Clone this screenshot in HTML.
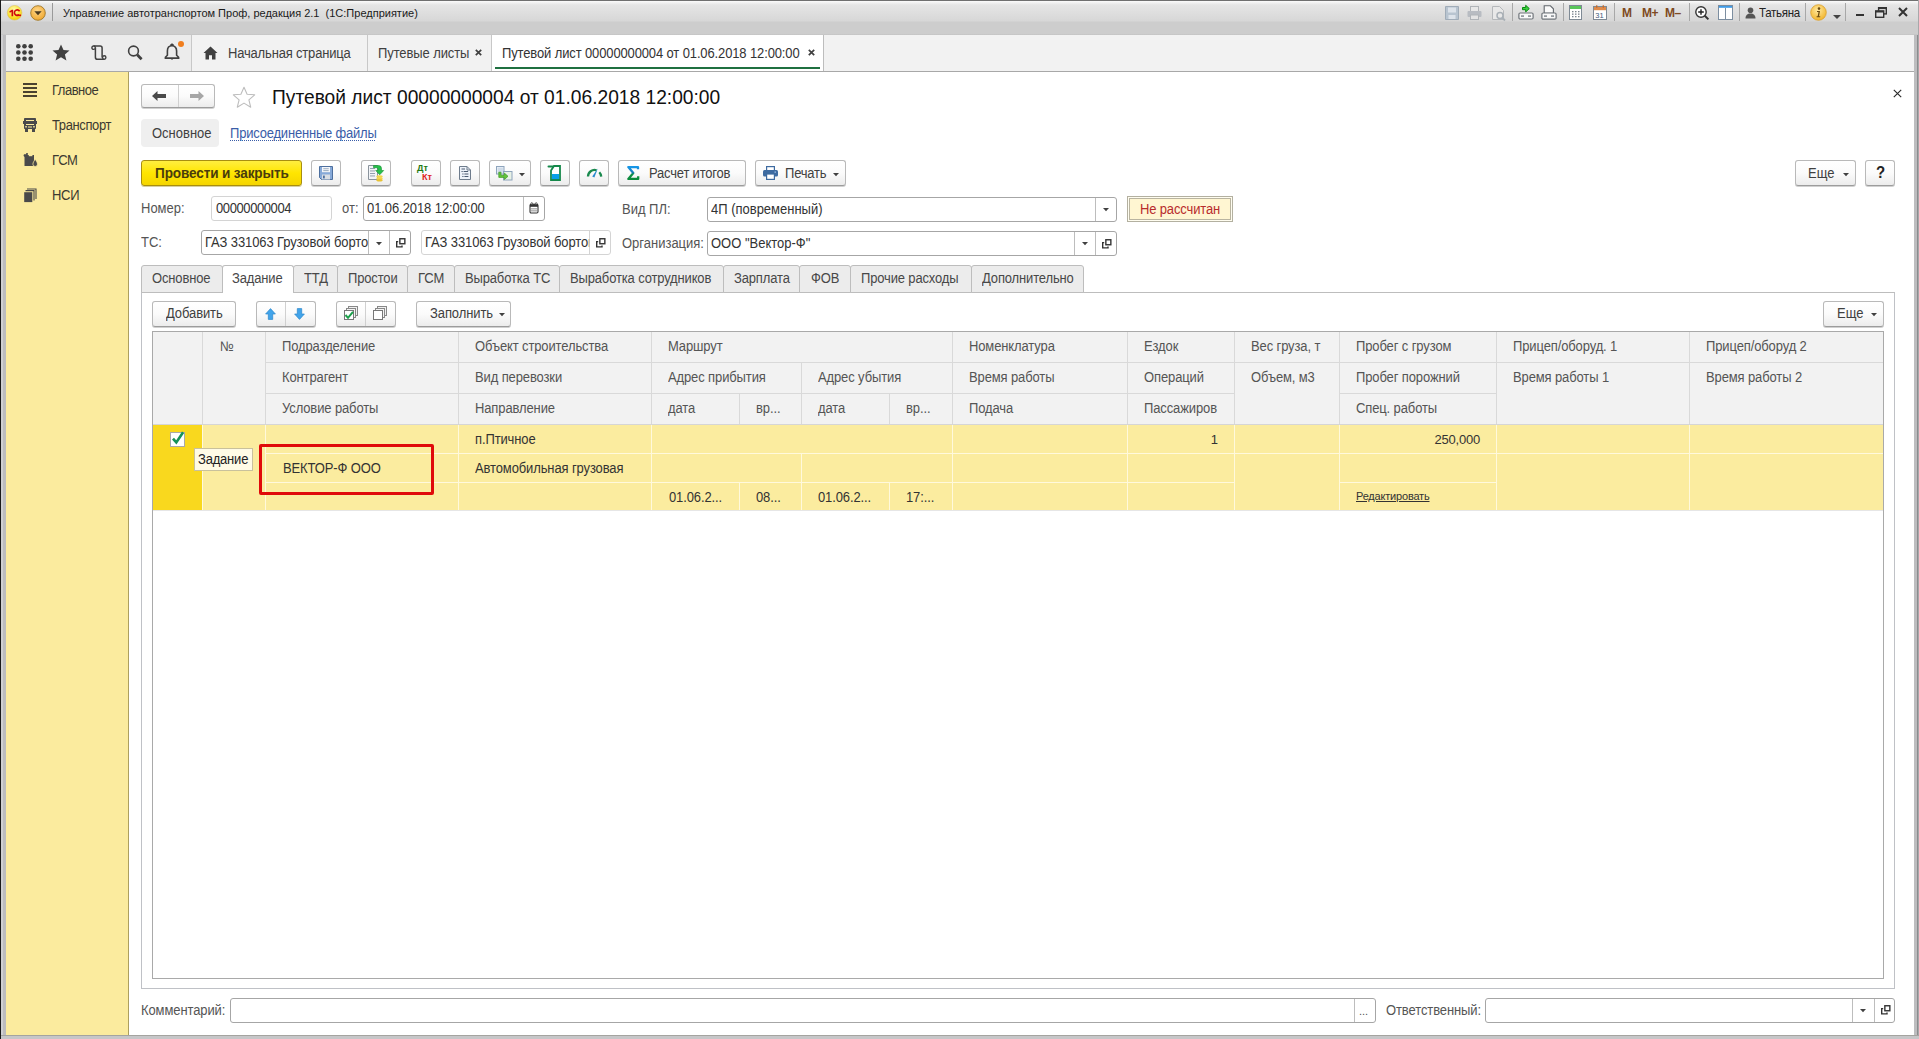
<!DOCTYPE html>
<html><head><meta charset="utf-8">
<style>
*{box-sizing:border-box;margin:0;padding:0}
html,body{width:1919px;height:1039px;overflow:hidden}
body{position:relative;background:#b8b8ba;font-family:"Liberation Sans",sans-serif;font-size:13px;color:#333}
.a{position:absolute}
svg.a{overflow:visible}
.t{position:absolute;white-space:pre}
</style></head><body>

<div class="a" style="left:0px;top:0px;width:1919px;height:1039px;background:#bcbcbe"></div>
<div class="a" style="left:0px;top:0px;width:1px;height:1039px;background:#1a1a1a"></div>
<div class="a" style="left:1px;top:0px;width:2px;height:1039px;background:#cfcfd1"></div>
<div class="a" style="left:1914px;top:0px;width:5px;height:1039px;background:#bdbdbf"></div>
<div class="a" style="left:1917px;top:0px;width:1px;height:1039px;background:#8c8c8e"></div>
<div class="a" style="left:1918px;top:0px;width:1px;height:1039px;background:#a8a8aa"></div>
<div class="a" style="left:1px;top:1035px;width:1918px;height:1px;background:#a4a4a0"></div>
<div class="a" style="left:1px;top:1036px;width:1918px;height:3px;background:#c6c6c8"></div>
<div class="a" style="left:0px;top:0px;width:1px;height:1039px;background:#1a1a1a"></div>
<div class="a" style="left:1px;top:0px;width:1917px;height:35px;background:linear-gradient(#6a6a6a 0px,#767676 1px,#fafafa 1.2px,#f0f0f0 3px,#e5e5e5 5px,#d7d7d7 21px,#cdcdcd 22px,#cdcdcd 33.5px,#c3c3c3 35px)"></div>
<svg class="a" style="left:7px;top:5px" width="16" height="16" viewBox="0 0 16 16"><defs><radialGradient id="g1" cx="45%" cy="30%" r="70%"><stop offset="0" stop-color="#fffbb0"/><stop offset="0.6" stop-color="#fbe640"/><stop offset="1" stop-color="#f2cc00"/></radialGradient></defs><circle cx="7.6" cy="7.8" r="7.3" fill="url(#g1)" stroke="#dcc060" stroke-width="0.6"/><path d="M2.2 6.4l2.6-1.6h1.4v6.4h-1.7v-4.4l-1.6 0.9z" fill="#d00a0a"/><path d="M12.6 6.2a2.8 2.6 0 1 0 -0.6 3.4" fill="none" stroke="#d00a0a" stroke-width="1.6"/><rect x="9.6" y="9.5" width="4.4" height="1.6" fill="#d00a0a"/></svg>
<svg class="a" style="left:30px;top:5px" width="16" height="16" viewBox="0 0 16 16"><defs><radialGradient id="g2" cx="45%" cy="35%" r="65%"><stop offset="0" stop-color="#ffd88a"/><stop offset="1" stop-color="#f0a830"/></radialGradient></defs><circle cx="8" cy="8" r="7.3" fill="url(#g2)" stroke="#a0782a" stroke-width="0.9"/><path d="M4.3 6.3h7.4l-3.7 4z" fill="#4a3a20"/></svg>
<div class="a" style="left:52px;top:3px;width:1px;height:18px;background:#9a9a9a"></div>
<div class="t" style="left:63px;top:7px;font-size:11.66px;line-height:11.66px;color:#1a1a1a;font-weight:normal;transform:scaleX(0.9434);transform-origin:0 0;">Управление автотранспортом Проф, редакция 2.1  (1С:Предприятие)</div>
<svg class="a" style="left:1445px;top:6px" width="14" height="14" viewBox="0 0 14 14"><path d="M0.5 0.5h13v13h-13z" fill="#b8c4d0" stroke="#a0acb8"/><rect x="3" y="1.5" width="8" height="5" fill="#dde3ea"/><rect x="3.5" y="9" width="7" height="4" fill="#dde3ea"/></svg>
<svg class="a" style="left:1467px;top:6px" width="15" height="14" viewBox="0 0 15 14"><rect x="3.5" y="0.5" width="8" height="5" fill="#e8e8e8" stroke="#b0b4b8"/><rect x="0.5" y="5" width="14" height="6" rx="1" fill="#b8bcc2"/><rect x="3.5" y="9" width="8" height="4.5" fill="#e4e4e4" stroke="#b0b4b8"/></svg>
<svg class="a" style="left:1492px;top:6px" width="14" height="15" viewBox="0 0 14 15"><path d="M0.5 0.5h7l4 4v9h-11z" fill="#e8e8e8" stroke="#b5b8bb"/><circle cx="8" cy="9.5" r="3" fill="none" stroke="#a9b0b6" stroke-width="1.5"/><path d="M10 11.5l3 3" stroke="#a9b0b6" stroke-width="1.8"/></svg>
<div class="a" style="left:1512px;top:3px;width:1px;height:18px;background:#a8a8a8"></div>
<svg class="a" style="left:1518px;top:4px" width="16" height="16" viewBox="0 0 16 16"><path d="M4.5 3.5h3.2v-2.2l3.6 3.3-3.6 3.3v-2.2h-3.2z" fill="#3ad040" stroke="#0a8a10" stroke-width="1"/><rect x="0.9" y="9" width="14.2" height="6" rx="1.2" fill="#f8f8f8" stroke="#6f747a" stroke-width="1.2"/><rect x="3" y="11.3" width="3" height="1.6" fill="#8a9096"/><rect x="10" y="11.3" width="3" height="1.6" fill="#8a9096"/><rect x="6" y="12.3" width="4" height="1" fill="#fff"/></svg>
<svg class="a" style="left:1541px;top:5px" width="16" height="15" viewBox="0 0 16 15"><path d="M3.2 0.8h6.2l3 3v4.5h-9.2z" fill="#fafafa" stroke="#63686e" stroke-width="1.1"/><rect x="0.9" y="8" width="14.2" height="6.2" rx="1.2" fill="#f8f8f8" stroke="#6f747a" stroke-width="1.2"/><rect x="3" y="10.3" width="3" height="1.6" fill="#8a9096"/><rect x="10" y="10.3" width="3" height="1.6" fill="#8a9096"/></svg>
<div class="a" style="left:1563px;top:3px;width:1px;height:18px;background:#a8a8a8"></div>
<svg class="a" style="left:1569px;top:5px" width="13" height="15" viewBox="0 0 13 15"><rect x="0.5" y="0.5" width="12" height="14" fill="#fff" stroke="#7f8a95"/><rect x="1" y="1" width="11" height="3" fill="#59c65a"/><g fill="#7a848e"><rect x="3" y="6" width="1.5" height="1.3"/><rect x="6" y="6" width="1.5" height="1.3"/><rect x="9" y="6" width="1.5" height="1.3"/><rect x="3" y="8.5" width="1.5" height="1.3"/><rect x="6" y="8.5" width="1.5" height="1.3"/><rect x="9" y="8.5" width="1.5" height="1.3"/><rect x="3" y="11" width="1.5" height="1.3"/><rect x="6" y="11" width="1.5" height="1.3"/><rect x="9" y="11" width="1.5" height="1.3"/></g></svg>
<svg class="a" style="left:1593px;top:5px" width="14" height="15" viewBox="0 0 14 15"><rect x="0.5" y="1.5" width="13" height="13" fill="#fff" stroke="#7f8a95"/><rect x="1" y="2" width="12" height="3.2" fill="#e08b4a"/><rect x="3" y="0.3" width="1.4" height="2.4" fill="#c06a30"/><rect x="9.6" y="0.3" width="1.4" height="2.4" fill="#c06a30"/><text x="2.3" y="12.8" font-family="Liberation Sans" font-size="7.5" fill="#3d5a7a">31</text></svg>
<div class="a" style="left:1614px;top:3px;width:1px;height:18px;background:#a8a8a8"></div>
<div class="t" style="left:1622px;top:7px;font-size:12px;line-height:12px;font-weight:bold;color:#7e4a22;letter-spacing:-0.3px">M</div>
<div class="t" style="left:1642px;top:7px;font-size:12px;line-height:12px;font-weight:bold;color:#7e4a22;letter-spacing:-0.5px">M+</div>
<div class="t" style="left:1665px;top:7px;font-size:12px;line-height:12px;font-weight:bold;color:#7e4a22;letter-spacing:-0.6px">M–</div>
<div class="a" style="left:1689px;top:3px;width:1px;height:18px;background:#a8a8a8"></div>
<svg class="a" style="left:1695px;top:6px" width="15" height="15" viewBox="0 0 15 15"><circle cx="6" cy="6" r="5.2" fill="#fff" stroke="#333" stroke-width="1.4"/><path d="M3.2 6h5.6M6 3.2v5.6" stroke="#222" stroke-width="1.4"/><path d="M9.8 9.8l3.6 3.6" stroke="#333" stroke-width="2"/></svg>
<svg class="a" style="left:1718px;top:5px" width="15" height="15" viewBox="0 0 15 15"><rect x="0.5" y="0.5" width="14" height="14" fill="#fff" stroke="#7c8ea0"/><rect x="1" y="1" width="13" height="1.8" fill="#3f9be6"/><path d="M7.5 3v11" stroke="#7c8ea0"/></svg>
<div class="a" style="left:1739px;top:3px;width:1px;height:18px;background:#a8a8a8"></div>
<svg class="a" style="left:1745px;top:7px" width="11" height="12" viewBox="0 0 11 12"><circle cx="5.5" cy="3.2" r="2.8" fill="#555"/><path d="M0.5 11.5c0-3.5 2-5 5-5s5 1.5 5 5z" fill="#555"/></svg>
<div class="t" style="left:1759px;top:7px;font-size:12.19px;line-height:12.19px;color:#222;font-weight:normal;transform:scaleX(0.9434);transform-origin:0 0;letter-spacing:-0.3px">Татьяна</div>
<div class="a" style="left:1805px;top:3px;width:1px;height:18px;background:#a8a8a8"></div>
<svg class="a" style="left:1810px;top:4px" width="17" height="17" viewBox="0 0 17 17"><defs><radialGradient id="g3" cx="45%" cy="35%" r="65%"><stop offset="0" stop-color="#ffe9a0"/><stop offset="1" stop-color="#f2b52c"/></radialGradient></defs><circle cx="8.5" cy="8.5" r="7.8" fill="url(#g3)" stroke="#d9a030" stroke-width="0.8"/><circle cx="9" cy="4.6" r="1.3" fill="#6a4a10"/><path d="M7 7h3l-1 5.2h1.2v1h-3.6v-1h1.1l0.8-4.2h-1.5z" fill="#6a4a10"/></svg>
<svg class="a" style="left:1833px;top:15px" width="8" height="4" viewBox="0 0 8 4"><path d="M0 0h8l-4 4z" fill="#444"/></svg>
<div class="a" style="left:1845px;top:3px;width:1px;height:18px;background:#a8a8a8"></div>
<div class="a" style="left:1856px;top:14px;width:8px;height:2px;background:#333"></div>
<svg class="a" style="left:1875px;top:7px" width="12" height="11" viewBox="0 0 12 11"><rect x="3.6" y="0.7" width="7.7" height="6.2" fill="none" stroke="#333" stroke-width="1.4"/><rect x="3.6" y="0.7" width="7.7" height="1.4" fill="#333"/><rect x="0.7" y="3.9" width="8" height="6.4" fill="#e0e0e0" stroke="#333" stroke-width="1.4"/><rect x="0.7" y="3.9" width="8" height="1.6" fill="#333"/></svg>
<svg class="a" style="left:1898px;top:7px" width="10" height="10" viewBox="0 0 10 10"><path d="M1 1l8 8M9 1l-8 8" stroke="#333" stroke-width="2"/></svg>
<div class="a" style="left:6px;top:35px;width:1908px;height:37px;background:#f2f2f2;border-bottom:1px solid #a8a8a8"></div>
<div class="a" style="left:6px;top:35px;width:185px;height:36px;background:#ececec"></div>
<div class="a" style="left:191px;top:35px;width:1px;height:36px;background:#c8c8c8"></div>
<svg class="a" style="left:16px;top:44px" width="17" height="17" viewBox="0 0 17 17"><circle cx="2.3" cy="2.3" r="2.3" fill="#404040"/><circle cx="2.3" cy="8.5" r="2.3" fill="#404040"/><circle cx="2.3" cy="14.7" r="2.3" fill="#404040"/><circle cx="8.5" cy="2.3" r="2.3" fill="#404040"/><circle cx="8.5" cy="8.5" r="2.3" fill="#404040"/><circle cx="8.5" cy="14.7" r="2.3" fill="#404040"/><circle cx="14.7" cy="2.3" r="2.3" fill="#404040"/><circle cx="14.7" cy="8.5" r="2.3" fill="#404040"/><circle cx="14.7" cy="14.7" r="2.3" fill="#404040"/></svg>
<svg class="a" style="left:52px;top:44px" width="18" height="17" viewBox="0 0 18 17"><path d="M9 0.5l2.5 5.6 6 0.5-4.6 4 1.5 6-5.4-3.3-5.4 3.3 1.5-6-4.6-4 6-0.5z" fill="#404040"/></svg>
<svg class="a" style="left:91px;top:45px" width="16" height="16" viewBox="0 0 16 16"><path d="M2.6 1H9.1A2 2 0 0 1 11.1 3V12.4 M4.4 2.6V12.4A2 2 0 0 0 6.4 14.3H13.2" fill="none" stroke="#404040" stroke-width="1.5"/><circle cx="2.6" cy="2.7" r="1.7" fill="#f0f0f0" stroke="#404040" stroke-width="1.4"/><circle cx="13.2" cy="12.5" r="1.7" fill="#f0f0f0" stroke="#404040" stroke-width="1.4"/></svg>
<svg class="a" style="left:127px;top:45px" width="17" height="17" viewBox="0 0 17 17"><circle cx="6.5" cy="6" r="4.9" fill="none" stroke="#404040" stroke-width="1.6"/><path d="M10.2 9.8l4.4 4.4" stroke="#404040" stroke-width="2.8"/></svg>
<svg class="a" style="left:164px;top:43px" width="16" height="18" viewBox="0 0 16 18"><path d="M8 2.8c-3 0-4.6 2.3-4.6 5.2v4.2l-2 2.1v0.8h13.2v-0.8l-2-2.1v-4.2c0-2.9-1.6-5.2-4.6-5.2z" fill="none" stroke="#404040" stroke-width="1.6"/><path d="M6.2 1.5l1.8-1.3 1.8 1.3v1.6h-3.6z" fill="#404040"/><path d="M6.3 15.3l1.7 1.7 1.7-1.7z" fill="#404040"/></svg>
<svg class="a" style="left:178px;top:41px" width="6" height="6" viewBox="0 0 6 6"><circle cx="3" cy="3" r="3" fill="#f07e1e"/></svg>
<svg class="a" style="left:203px;top:46px" width="15" height="14" viewBox="0 0 15 14"><path d="M7.5 0.5l7 6.4h-2v6.6h-3.5v-4.3h-3v4.3h-3.5v-6.6h-2z" fill="#404040"/></svg>
<div class="t" style="left:228px;top:47px;font-size:13.78px;line-height:13.78px;color:#404040;font-weight:normal;transform:scaleX(0.9434);transform-origin:0 0;letter-spacing:-0.18px">Начальная страница</div>
<div class="a" style="left:367px;top:35px;width:1px;height:36px;background:#c8c8c8"></div>
<div class="t" style="left:378px;top:47px;font-size:13.78px;line-height:13.78px;color:#404040;font-weight:normal;transform:scaleX(0.9434);transform-origin:0 0;letter-spacing:-0.1px">Путевые листы</div>
<svg class="a" style="left:475px;top:49px" width="7" height="7" viewBox="0 0 7 7"><path d="M0.8 0.8l5.4 5.4M6.2 0.8l-5.4 5.4" stroke="#404040" stroke-width="1.7"/></svg>
<div class="a" style="left:491px;top:35px;width:1px;height:36px;background:#c8c8c8"></div>
<div class="a" style="left:492px;top:35px;width:331px;height:36px;background:#fff"></div>
<div class="a" style="left:823px;top:35px;width:1px;height:36px;background:#bdbdbd"></div>
<div class="t" style="left:502px;top:47px;font-size:13.78px;line-height:13.78px;color:#333;font-weight:normal;transform:scaleX(0.9434);transform-origin:0 0;letter-spacing:-0.13px">Путевой лист 00000000004 от 01.06.2018 12:00:00</div>
<svg class="a" style="left:808px;top:49px" width="7" height="7" viewBox="0 0 7 7"><path d="M0.8 0.8l5.4 5.4M6.2 0.8l-5.4 5.4" stroke="#404040" stroke-width="1.7"/></svg>
<div class="a" style="left:495px;top:67px;width:325px;height:2px;background:#1f7040"></div>
<div class="a" style="left:6px;top:72px;width:123px;height:963px;background:#fbeb9e"></div>
<div class="a" style="left:128px;top:72px;width:1px;height:963px;background:#ad9f5e"></div>
<svg class="a" style="left:23px;top:83px" width="14" height="14" viewBox="0 0 14 14"><g fill="#4a4230"><rect x="0" y="0" width="14" height="2"/><rect x="0" y="4" width="14" height="2"/><rect x="0" y="8" width="14" height="2"/><rect x="0" y="12" width="14" height="2"/></g></svg>
<div class="t" style="left:52px;top:84px;font-size:13.78px;line-height:13.78px;color:#3d3a30;font-weight:normal;transform:scaleX(0.9434);transform-origin:0 0;letter-spacing:-0.5px">Главное</div>
<svg class="a" style="left:22px;top:117px" width="16" height="16" viewBox="0 0 16 16"><rect x="2" y="1" width="12" height="11" rx="0.8" fill="#4a4a4a"/><rect x="4.5" y="3.5" width="7" height="4" fill="none" stroke="#fbeb9e" stroke-width="1"/><rect x="1" y="4" width="14" height="3" fill="#4a4a4a"/><rect x="3.3" y="9" width="1.5" height="1.5" fill="#fbeb9e"/><rect x="11.2" y="9" width="1.5" height="1.5" fill="#fbeb9e"/><rect x="6" y="9.5" width="4" height="1" fill="#fbeb9e"/><rect x="3" y="12" width="3" height="3" fill="#4a4a4a"/><rect x="10" y="12" width="3" height="3" fill="#4a4a4a"/></svg>
<div class="t" style="left:52px;top:119px;font-size:13.78px;line-height:13.78px;color:#3d3a30;font-weight:normal;transform:scaleX(0.9434);transform-origin:0 0;letter-spacing:-0.4px">Транспорт</div>
<svg class="a" style="left:22px;top:152px" width="16" height="16" viewBox="0 0 16 16"><path d="M2 2.2h2.2v-1.2h1.6v2h6.2v11h-9.5v-9l-1-1.2z" fill="#4a4a4a"/><rect x="6.8" y="2.6" width="3.6" height="1.6" fill="#fbeb9e"/><path d="M13.2 7.2c1 1.6 2.3 3.3 2.3 5a2.3 2.3 0 0 1-4.6 0c0-1.7 1.3-3.4 2.3-5z" fill="#4a4a4a" stroke="#fbeb9e" stroke-width="0.8"/></svg>
<div class="t" style="left:52px;top:154px;font-size:13.78px;line-height:13.78px;color:#3d3a30;font-weight:normal;transform:scaleX(0.9434);transform-origin:0 0;letter-spacing:-0.3px">ГСМ</div>
<svg class="a" style="left:23px;top:188px" width="14" height="15" viewBox="0 0 14 15"><path d="M4 1h9v10" fill="none" stroke="#4a4a4a" stroke-width="1.1"/><path d="M2.5 2.6h8.5v10" fill="none" stroke="#4a4a4a" stroke-width="1.1"/><rect x="1.2" y="4.2" width="8.1" height="9.9" fill="#4a4a4a"/></svg>
<div class="t" style="left:52px;top:189px;font-size:13.78px;line-height:13.78px;color:#3d3a30;font-weight:normal;transform:scaleX(0.9434);transform-origin:0 0;letter-spacing:-0.3px">НСИ</div>
<div class="a" style="left:129px;top:72px;width:1785px;height:963px;background:#fff"></div>
<div class="a" style="left:141px;top:84px;width:74px;height:24px;border:1px solid #b9b9b9;border-radius:3px;background:linear-gradient(#ffffff 0%,#fbfbfb 50%,#ececec 100%);border-bottom-color:#9c9c9c;box-shadow:0 1px 0 #d0d0d0;"></div>
<div class="a" style="left:178px;top:85px;width:1px;height:22px;background:#d0d0d0"></div>
<svg class="a" style="left:152px;top:91px" width="14" height="10" viewBox="0 0 14 10"><path d="M0 5l5.5-5v3h8.5v4h-8.5v3z" fill="#4a4a4a"/></svg>
<svg class="a" style="left:190px;top:91px" width="14" height="10" viewBox="0 0 14 10"><path d="M14 5l-5.5-5v3h-8.5v4h8.5v3z" fill="#a6a6a6"/></svg>
<svg class="a" style="left:232px;top:86px" width="24" height="22" viewBox="0 0 24 22"><path d="M12 1.2l3.1 7 7.6 0.6-5.8 5 1.8 7.4-6.7-4.1-6.7 4.1 1.8-7.4-5.8-5 7.6-0.6z" fill="none" stroke="#bdbdbd" stroke-width="1.1" stroke-linejoin="round"/></svg>
<div class="t" style="left:272px;top:87px;font-size:20.35px;line-height:20.35px;color:#111;font-weight:normal;transform:scaleX(0.9434);transform-origin:0 0;">Путевой лист 00000000004 от 01.06.2018 12:00:00</div>
<svg class="a" style="left:1893px;top:89px" width="9" height="9" viewBox="0 0 9 9"><path d="M0.8 0.8l7.4 7.4M8.2 0.8l-7.4 7.4" stroke="#2a2a2a" stroke-width="1.15"/></svg>
<div class="a" style="left:141px;top:119px;width:78px;height:28px;background:#efefef;border-radius:4px"></div>
<div class="t" style="left:151.5px;top:127px;font-size:13.78px;line-height:13.78px;color:#404040;font-weight:normal;transform:scaleX(0.9434);transform-origin:0 0;">Основное</div>
<div class="t" style="left:230px;top:127px;font-size:13.78px;line-height:13.78px;color:#3a5da8;font-weight:normal;transform:scaleX(0.9434);transform-origin:0 0;letter-spacing:-0.2px">Присоединенные файлы</div>
<div class="a" style="left:230px;top:140px;width:146px;height:1px;background:repeating-linear-gradient(90deg,#3a5da8 0 1px,transparent 1px 2px)"></div>
<div class="a" style="left:141px;top:160px;width:161px;height:26px;border:1px solid #a88e10;border-radius:3px;background:linear-gradient(#ffee40 0%,#ffe500 50%,#f5d500 100%);box-shadow:0 1px 0 #d8d0a0"></div>
<div class="t" style="left:155px;top:166px;font-size:14.42px;line-height:14.42px;color:#4a3c0c;font-weight:bold;transform:scaleX(0.9434);transform-origin:0 0;letter-spacing:-0.15px">Провести и закрыть</div>
<div class="a" style="left:311px;top:160px;width:30px;height:26px;border:1px solid #b9b9b9;border-radius:3px;background:linear-gradient(#ffffff 0%,#fbfbfb 50%,#ececec 100%);border-bottom-color:#9c9c9c;box-shadow:0 1px 0 #d0d0d0;"></div>
<svg class="a" style="left:319px;top:166px" width="14" height="14" viewBox="0 0 14 14"><path d="M0.5 0.5h13v13h-11l-2-2z" fill="#86a9d8" stroke="#4d6f9e"/><rect x="3" y="1" width="8" height="5.2" fill="#f4f6fa"/><rect x="4.3" y="2.3" width="5.4" height="0.9" fill="#8fa3b8"/><rect x="4.3" y="4.2" width="5.4" height="0.9" fill="#8fa3b8"/><rect x="3" y="8.5" width="8" height="5" fill="#d8dde4"/><rect x="4" y="9.6" width="1.8" height="2.8" fill="#4d6f9e"/></svg>
<div class="a" style="left:361px;top:160px;width:30px;height:26px;border:1px solid #b9b9b9;border-radius:3px;background:linear-gradient(#ffffff 0%,#fbfbfb 50%,#ececec 100%);border-bottom-color:#9c9c9c;box-shadow:0 1px 0 #d0d0d0;"></div>
<svg class="a" style="left:368px;top:165px" width="16" height="17" viewBox="0 0 16 17"><path d="M0.5 0.5h9v14h-9z" fill="#f2f4f7" stroke="#8a939c"/><g fill="#8a96a6"><rect x="2" y="3" width="5" height="0.9"/><rect x="2" y="5.5" width="5" height="0.9"/><rect x="2" y="8" width="5" height="0.9"/><rect x="2" y="10.5" width="5" height="0.9"/></g><path d="M5.5 0.5h5a3 3 0 0 1 3 3v2h2.2l-4 4.3-4-4.3h2.2v-1.5a1.3 1.3 0 0 0-1.3-1.3h-3.1z" fill="#25c04a" stroke="#159030" stroke-width="0.6"/><ellipse cx="11.5" cy="11.5" rx="3.2" ry="1.3" fill="#f3d54a"/><ellipse cx="11.5" cy="13.5" rx="3.2" ry="1.3" fill="#f3d54a"/><ellipse cx="11.5" cy="15.2" rx="3.2" ry="1.3" fill="#e8c234"/></svg>
<div class="a" style="left:411px;top:160px;width:30px;height:26px;border:1px solid #b9b9b9;border-radius:3px;background:linear-gradient(#ffffff 0%,#fbfbfb 50%,#ececec 100%);border-bottom-color:#9c9c9c;box-shadow:0 1px 0 #d0d0d0;"></div>
<div class="t" style="left:417px;top:164px;font-size:9px;line-height:9px;font-weight:bold;color:#1e7a12">Дт</div>
<div class="t" style="left:422px;top:173px;font-size:9px;line-height:9px;font-weight:bold;color:#e02020">Кт</div>
<div class="a" style="left:450px;top:160px;width:30px;height:26px;border:1px solid #b9b9b9;border-radius:3px;background:linear-gradient(#ffffff 0%,#fbfbfb 50%,#ececec 100%);border-bottom-color:#9c9c9c;box-shadow:0 1px 0 #d0d0d0;"></div>
<svg class="a" style="left:459px;top:166px" width="12" height="14" viewBox="0 0 12 14"><path d="M0.5 0.5h7.5l3.5 3.5v9.5h-11z" fill="#eef3fa" stroke="#6e7c8c"/><path d="M8 0.5v3.5h3.5" fill="none" stroke="#6e7c8c"/><g fill="#4a5a70"><rect x="2.5" y="2.5" width="3.5" height="1"/><rect x="2.5" y="5" width="1.2" height="1"/><rect x="4.6" y="5" width="4.5" height="1"/><rect x="3.3" y="7.5" width="1.2" height="1"/><rect x="5.4" y="7.5" width="4" height="1"/><rect x="3.3" y="10" width="1.2" height="1"/><rect x="5.4" y="10" width="4" height="1"/></g></svg>
<div class="a" style="left:489px;top:160px;width:42px;height:26px;border:1px solid #b9b9b9;border-radius:3px;background:linear-gradient(#ffffff 0%,#fbfbfb 50%,#ececec 100%);border-bottom-color:#9c9c9c;box-shadow:0 1px 0 #d0d0d0;"></div>
<svg class="a" style="left:496px;top:166px" width="17" height="15" viewBox="0 0 17 15"><rect x="0.5" y="0.5" width="7.5" height="7.5" fill="#e6eef6" stroke="#8ea4bc"/><rect x="1.8" y="1.8" width="5" height="5" fill="#cfdbe8"/><rect x="7.5" y="5.5" width="8.5" height="8.5" fill="#e9f2e6" stroke="#8ea4bc"/><path d="M2.8 6.2v5.2h5.6v2.1l3.6-3.2-3.6-3.2v2.1h-3.4v-3z" fill="#64c43c" stroke="#3c9a22" stroke-width="0.7"/></svg>
<svg class="a" style="left:518.5px;top:173.0px" width="6" height="4" viewBox="0 0 6 4"><path d="M0 0h6l-3 3.2z" fill="#404040"/></svg>
<div class="a" style="left:540px;top:160px;width:30px;height:26px;border:1px solid #b9b9b9;border-radius:3px;background:linear-gradient(#ffffff 0%,#fbfbfb 50%,#ececec 100%);border-bottom-color:#9c9c9c;box-shadow:0 1px 0 #d0d0d0;"></div>
<svg class="a" style="left:547px;top:164px" width="15" height="18" viewBox="0 0 15 18"><path d="M7 2h6v14h-9v-9.5z" fill="#fff" stroke="#14884a" stroke-width="1.8"/><rect x="4.9" y="10" width="7.2" height="5.1" fill="#08a0e8"/><path d="M1.6 2.5h4.2" stroke="#14884a" stroke-width="2.2" stroke-linecap="round"/></svg>
<div class="a" style="left:579px;top:160px;width:30px;height:26px;border:1px solid #b9b9b9;border-radius:3px;background:linear-gradient(#ffffff 0%,#fbfbfb 50%,#ececec 100%);border-bottom-color:#9c9c9c;box-shadow:0 1px 0 #d0d0d0;"></div>
<svg class="a" style="left:586px;top:167px" width="17" height="11" viewBox="0 0 17 11"><path d="M2 9.6A6.6 6.6 0 0 1 10.6 3.3" fill="none" stroke="#1a8a4e" stroke-width="2.3"/><path d="M13.3 5.3A6.6 6.6 0 0 1 15.2 9.6" fill="none" stroke="#1a8a4e" stroke-width="2.3"/><path d="M6.2 9.4l5.6-8 -3.4 9.2z" fill="#2a8ad0"/></svg>
<div class="a" style="left:618px;top:160px;width:128px;height:26px;border:1px solid #b9b9b9;border-radius:3px;background:linear-gradient(#ffffff 0%,#fbfbfb 50%,#ececec 100%);border-bottom-color:#9c9c9c;box-shadow:0 1px 0 #d0d0d0;"></div>
<svg class="a" style="left:626px;top:165px" width="14" height="16" viewBox="0 0 14 16"><defs><linearGradient id="sg" x1="0" y1="0" x2="0" y2="1"><stop offset="0" stop-color="#1596e8"/><stop offset="0.45" stop-color="#1a7ab8"/><stop offset="0.6" stop-color="#10904a"/><stop offset="1" stop-color="#0a8a3a"/></linearGradient></defs><path d="M12 4.3V2.1H2.3L7.3 8 2.3 13.9H12.2V11.2" fill="none" stroke="url(#sg)" stroke-width="2.3" stroke-linejoin="round"/></svg>
<div class="t" style="left:648.7px;top:167px;font-size:13.78px;line-height:13.78px;color:#404040;font-weight:normal;transform:scaleX(0.9434);transform-origin:0 0;letter-spacing:-0.2px">Расчет итогов</div>
<div class="a" style="left:755px;top:160px;width:91px;height:26px;border:1px solid #b9b9b9;border-radius:3px;background:linear-gradient(#ffffff 0%,#fbfbfb 50%,#ececec 100%);border-bottom-color:#9c9c9c;box-shadow:0 1px 0 #d0d0d0;"></div>
<svg class="a" style="left:763px;top:166px" width="15" height="14" viewBox="0 0 15 14"><rect x="3.6" y="0.6" width="7.8" height="4" fill="#fff" stroke="#3d6aa0" stroke-width="1.2"/><rect x="0" y="4" width="15" height="6.5" rx="1.5" fill="#3d6aa0"/><rect x="3.6" y="8" width="7.8" height="5.4" fill="#fff" stroke="#3d6aa0" stroke-width="1.2"/><rect x="11.5" y="5.5" width="1.5" height="1.2" fill="#9fc0e8"/></svg>
<div class="t" style="left:785.4px;top:167px;font-size:13.78px;line-height:13.78px;color:#404040;font-weight:normal;transform:scaleX(0.9434);transform-origin:0 0;letter-spacing:-0.2px">Печать</div>
<svg class="a" style="left:833px;top:172.5px" width="6" height="4" viewBox="0 0 6 4"><path d="M0 0h6l-3 3.2z" fill="#404040"/></svg>
<div class="a" style="left:1795px;top:160px;width:61px;height:26px;border:1px solid #b9b9b9;border-radius:3px;background:linear-gradient(#ffffff 0%,#fbfbfb 50%,#ececec 100%);border-bottom-color:#9c9c9c;box-shadow:0 1px 0 #d0d0d0;"></div>
<div class="t" style="left:1808px;top:167px;font-size:13.78px;line-height:13.78px;color:#404040;font-weight:normal;transform:scaleX(0.9434);transform-origin:0 0;">Еще</div>
<svg class="a" style="left:1843px;top:172.5px" width="6" height="4" viewBox="0 0 6 4"><path d="M0 0h6l-3 3.2z" fill="#404040"/></svg>
<div class="a" style="left:1865px;top:160px;width:30px;height:26px;border:1px solid #b9b9b9;border-radius:3px;background:linear-gradient(#ffffff 0%,#fbfbfb 50%,#ececec 100%);border-bottom-color:#9c9c9c;box-shadow:0 1px 0 #d0d0d0;"></div>
<div class="t" style="left:1876px;top:165px;font-size:15.9px;line-height:15.9px;color:#222;font-weight:bold;transform:scaleX(0.9434);transform-origin:0 0;">?</div>
<div class="t" style="left:141px;top:202px;font-size:13.78px;line-height:13.78px;color:#555;font-weight:normal;transform:scaleX(0.9434);transform-origin:0 0;">Номер:</div>
<div class="a" style="left:211px;top:196px;width:121px;height:25px;border:1px solid #d4d4d4;border-radius:3px;background:#fff"></div>
<div class="t" style="left:215.5px;top:202px;font-size:13.78px;line-height:13.78px;color:#333;font-weight:normal;transform:scaleX(0.9434);transform-origin:0 0;letter-spacing:-0.42px">00000000004</div>
<div class="t" style="left:342px;top:202px;font-size:13.78px;line-height:13.78px;color:#555;font-weight:normal;transform:scaleX(0.9434);transform-origin:0 0;">от:</div>
<div class="a" style="left:363px;top:196px;width:182px;height:25px;border:1px solid #a6a6a6;border-radius:3px;background:#fff"></div>
<div class="a" style="left:523px;top:197px;width:1px;height:23px;background:#bdbdbd"></div>
<div class="t" style="left:367px;top:202px;font-size:13.78px;line-height:13.78px;color:#333;font-weight:normal;transform:scaleX(0.9434);transform-origin:0 0;letter-spacing:-0.08px">01.06.2018 12:00:00</div>
<svg class="a" style="left:529px;top:202px" width="10" height="12" viewBox="0 0 10 12"><rect x="1" y="2.2" width="8" height="8.8" rx="1.2" fill="#fff" stroke="#333" stroke-width="1.1"/><rect x="1" y="2.2" width="8" height="2.6" fill="#333"/><circle cx="2.8" cy="1.6" r="0.9" fill="#fff" stroke="#333" stroke-width="0.8"/><circle cx="7.2" cy="1.6" r="0.9" fill="#fff" stroke="#333" stroke-width="0.8"/><g fill="#333"><circle cx="3" cy="6.8" r="0.65"/><circle cx="5" cy="6.8" r="0.65"/><circle cx="7" cy="6.8" r="0.65"/><circle cx="3" cy="8.8" r="0.65"/><circle cx="5" cy="8.8" r="0.65"/><circle cx="7" cy="8.8" r="0.65"/></g></svg>
<div class="t" style="left:621.5px;top:203px;font-size:13.78px;line-height:13.78px;color:#555;font-weight:normal;transform:scaleX(0.9434);transform-origin:0 0;">Вид ПЛ:</div>
<div class="a" style="left:707px;top:197px;width:410px;height:25px;border:1px solid #a6a6a6;border-radius:3px;background:#fff"></div>
<div class="a" style="left:1095px;top:198px;width:1px;height:23px;background:#bdbdbd"></div>
<div class="t" style="left:711px;top:203px;font-size:13.78px;line-height:13.78px;color:#333;font-weight:normal;transform:scaleX(0.9434);transform-origin:0 0;">4П (повременный)</div>
<svg class="a" style="left:1102.5px;top:208.0px" width="6" height="4" viewBox="0 0 6 4"><path d="M0 0h6l-3 3.2z" fill="#404040"/></svg>
<div class="a" style="left:1127px;top:196px;width:106px;height:26px;border:1px solid #b3b0a0;background:#fff6d2;box-shadow:inset 0 0 0 1px #fffdf0,inset 0 0 0 2px #b9b4a0"></div>
<div class="t" style="left:1139.5px;top:203px;font-size:13.78px;line-height:13.78px;color:#b82c2c;font-weight:normal;transform:scaleX(0.9434);transform-origin:0 0;letter-spacing:-0.15px">Не рассчитан</div>
<div class="t" style="left:141px;top:236px;font-size:13.78px;line-height:13.78px;color:#555;font-weight:normal;transform:scaleX(0.9434);transform-origin:0 0;">ТС:</div>
<div class="a" style="left:201px;top:230px;width:210px;height:25px;border:1px solid #a6a6a6;border-radius:3px;background:#fff"></div>
<div class="a" style="left:368px;top:231px;width:1px;height:23px;background:#bdbdbd"></div>
<div class="a" style="left:389px;top:231px;width:1px;height:23px;background:#bdbdbd"></div>
<div class="t" style="left:205px;top:236px;font-size:13.78px;line-height:13.78px;color:#333;font-weight:normal;transform:scaleX(0.9434);transform-origin:0 0;width:172.8px;overflow:hidden;letter-spacing:-0.1px">ГАЗ 331063 Грузовой бортовой</div>
<svg class="a" style="left:375.5px;top:241.5px" width="6" height="4" viewBox="0 0 6 4"><path d="M0 0h6l-3 3.2z" fill="#404040"/></svg>
<svg class="a" style="left:396px;top:238px" width="10" height="10" viewBox="0 0 10 10"><rect x="3.85" y="0.75" width="5" height="5" fill="none" stroke="#333" stroke-width="1.4"/><path d="M2.2 3.6H0.7V8.9H6V7.4" fill="none" stroke="#333" stroke-width="1.4"/></svg>
<div class="a" style="left:421px;top:230px;width:190px;height:25px;border:1px solid #d4d4d4;border-radius:3px;background:#fff"></div>
<div class="a" style="left:589px;top:231px;width:1px;height:23px;background:#d4d4d4"></div>
<div class="t" style="left:425px;top:236px;font-size:13.78px;line-height:13.78px;color:#333;font-weight:normal;transform:scaleX(0.9434);transform-origin:0 0;width:173.8px;overflow:hidden;letter-spacing:-0.1px">ГАЗ 331063 Грузовой бортовой</div>
<svg class="a" style="left:596px;top:238px" width="10" height="10" viewBox="0 0 10 10"><rect x="3.85" y="0.75" width="5" height="5" fill="none" stroke="#333" stroke-width="1.4"/><path d="M2.2 3.6H0.7V8.9H6V7.4" fill="none" stroke="#333" stroke-width="1.4"/></svg>
<div class="t" style="left:621.5px;top:237px;font-size:13.78px;line-height:13.78px;color:#555;font-weight:normal;transform:scaleX(0.9434);transform-origin:0 0;">Организация:</div>
<div class="a" style="left:707px;top:231px;width:410px;height:25px;border:1px solid #a6a6a6;border-radius:3px;background:#fff"></div>
<div class="a" style="left:1074px;top:232px;width:1px;height:23px;background:#bdbdbd"></div>
<div class="a" style="left:1095px;top:232px;width:1px;height:23px;background:#bdbdbd"></div>
<div class="t" style="left:711px;top:237px;font-size:13.78px;line-height:13.78px;color:#333;font-weight:normal;transform:scaleX(0.9434);transform-origin:0 0;">ООО "Вектор-Ф"</div>
<svg class="a" style="left:1081.5px;top:242.0px" width="6" height="4" viewBox="0 0 6 4"><path d="M0 0h6l-3 3.2z" fill="#404040"/></svg>
<svg class="a" style="left:1102px;top:238.5px" width="10" height="10" viewBox="0 0 10 10"><rect x="3.85" y="0.75" width="5" height="5" fill="none" stroke="#333" stroke-width="1.4"/><path d="M2.2 3.6H0.7V8.9H6V7.4" fill="none" stroke="#333" stroke-width="1.4"/></svg>
<div class="a" style="left:141px;top:292px;width:1754px;height:697px;border:1px solid #bfc1c6;border-top:1px solid #bdbdbd"></div>
<div class="a" style="left:141px;top:265px;width:82px;height:28px;background:#ececec;border:1px solid #bdbdbd;border-radius:3px 3px 0 0;border-bottom:1px solid #bdbdbd"></div>
<div class="a" style="left:222px;top:265px;width:72px;height:28px;background:#fff;border:1px solid #bdbdbd;border-radius:3px 3px 0 0;border-bottom:none;height:28px"></div>
<div class="a" style="left:223px;top:291px;width:70px;height:2px;background:#fff"></div>
<div class="a" style="left:293px;top:265px;width:45px;height:28px;background:#ececec;border:1px solid #bdbdbd;border-radius:3px 3px 0 0;border-bottom:1px solid #bdbdbd"></div>
<div class="a" style="left:337px;top:265px;width:71px;height:28px;background:#ececec;border:1px solid #bdbdbd;border-radius:3px 3px 0 0;border-bottom:1px solid #bdbdbd"></div>
<div class="a" style="left:407px;top:265px;width:48px;height:28px;background:#ececec;border:1px solid #bdbdbd;border-radius:3px 3px 0 0;border-bottom:1px solid #bdbdbd"></div>
<div class="a" style="left:454px;top:265px;width:106px;height:28px;background:#ececec;border:1px solid #bdbdbd;border-radius:3px 3px 0 0;border-bottom:1px solid #bdbdbd"></div>
<div class="a" style="left:559px;top:265px;width:165px;height:28px;background:#ececec;border:1px solid #bdbdbd;border-radius:3px 3px 0 0;border-bottom:1px solid #bdbdbd"></div>
<div class="a" style="left:723px;top:265px;width:77px;height:28px;background:#ececec;border:1px solid #bdbdbd;border-radius:3px 3px 0 0;border-bottom:1px solid #bdbdbd"></div>
<div class="a" style="left:799px;top:265px;width:52px;height:28px;background:#ececec;border:1px solid #bdbdbd;border-radius:3px 3px 0 0;border-bottom:1px solid #bdbdbd"></div>
<div class="a" style="left:850px;top:265px;width:122px;height:28px;background:#ececec;border:1px solid #bdbdbd;border-radius:3px 3px 0 0;border-bottom:1px solid #bdbdbd"></div>
<div class="a" style="left:971px;top:265px;width:113px;height:28px;background:#ececec;border:1px solid #bdbdbd;border-radius:3px 3px 0 0;border-bottom:1px solid #bdbdbd"></div>
<div class="t" style="left:152px;top:272px;font-size:13.78px;line-height:13.78px;color:#484848;font-weight:normal;transform:scaleX(0.9434);transform-origin:0 0;letter-spacing:-0.15px">Основное</div>
<div class="t" style="left:232px;top:272px;font-size:13.78px;line-height:13.78px;color:#484848;font-weight:normal;transform:scaleX(0.9434);transform-origin:0 0;letter-spacing:-0.15px">Задание</div>
<div class="t" style="left:303.6px;top:272px;font-size:13.78px;line-height:13.78px;color:#484848;font-weight:normal;transform:scaleX(0.9434);transform-origin:0 0;letter-spacing:-0.15px">ТТД</div>
<div class="t" style="left:347.8px;top:272px;font-size:13.78px;line-height:13.78px;color:#484848;font-weight:normal;transform:scaleX(0.9434);transform-origin:0 0;letter-spacing:-0.15px">Простои</div>
<div class="t" style="left:417.7px;top:272px;font-size:13.78px;line-height:13.78px;color:#484848;font-weight:normal;transform:scaleX(0.9434);transform-origin:0 0;letter-spacing:-0.15px">ГСМ</div>
<div class="t" style="left:465.2px;top:272px;font-size:13.78px;line-height:13.78px;color:#484848;font-weight:normal;transform:scaleX(0.9434);transform-origin:0 0;letter-spacing:-0.15px">Выработка ТС</div>
<div class="t" style="left:569.7px;top:272px;font-size:13.78px;line-height:13.78px;color:#484848;font-weight:normal;transform:scaleX(0.9434);transform-origin:0 0;letter-spacing:-0.15px">Выработка сотрудников</div>
<div class="t" style="left:734.2px;top:272px;font-size:13.78px;line-height:13.78px;color:#484848;font-weight:normal;transform:scaleX(0.9434);transform-origin:0 0;letter-spacing:-0.15px">Зарплата</div>
<div class="t" style="left:810.5px;top:272px;font-size:13.78px;line-height:13.78px;color:#484848;font-weight:normal;transform:scaleX(0.9434);transform-origin:0 0;letter-spacing:-0.15px">ФОВ</div>
<div class="t" style="left:861px;top:272px;font-size:13.78px;line-height:13.78px;color:#484848;font-weight:normal;transform:scaleX(0.9434);transform-origin:0 0;letter-spacing:-0.15px">Прочие расходы</div>
<div class="t" style="left:981.7px;top:272px;font-size:13.78px;line-height:13.78px;color:#484848;font-weight:normal;transform:scaleX(0.9434);transform-origin:0 0;letter-spacing:-0.15px">Дополнительно</div>
<div class="a" style="left:152px;top:301px;width:84px;height:26px;border:1px solid #b9b9b9;border-radius:3px;background:linear-gradient(#ffffff 0%,#fbfbfb 50%,#ececec 100%);border-bottom-color:#9c9c9c;box-shadow:0 1px 0 #d0d0d0;"></div>
<div class="t" style="left:165.9px;top:307px;font-size:13.78px;line-height:13.78px;color:#404040;font-weight:normal;transform:scaleX(0.9434);transform-origin:0 0;letter-spacing:-0.1px">Добавить</div>
<div class="a" style="left:256px;top:301px;width:60px;height:26px;border:1px solid #b9b9b9;border-radius:3px;background:linear-gradient(#ffffff 0%,#fbfbfb 50%,#ececec 100%);border-bottom-color:#9c9c9c;box-shadow:0 1px 0 #d0d0d0;"></div>
<div class="a" style="left:285px;top:302px;width:1px;height:24px;background:#d0d0d0"></div>
<svg class="a" style="left:265px;top:308px" width="11" height="12" viewBox="0 0 11 12"><path d="M5.5 0.6l4.9 5.4h-2.7v5.4h-4.4v-5.4h-2.7z" fill="#42a4ea" stroke="#2b86cc" stroke-width="0.7"/></svg>
<svg class="a" style="left:294px;top:308px" width="11" height="12" viewBox="0 0 11 12"><path d="M5.5 11.4l4.9-5.4h-2.7v-5.4h-4.4v5.4h-2.7z" fill="#42a4ea" stroke="#2b86cc" stroke-width="0.7"/></svg>
<div class="a" style="left:336px;top:301px;width:60px;height:26px;border:1px solid #b9b9b9;border-radius:3px;background:linear-gradient(#ffffff 0%,#fbfbfb 50%,#ececec 100%);border-bottom-color:#9c9c9c;box-shadow:0 1px 0 #d0d0d0;"></div>
<div class="a" style="left:365px;top:302px;width:1px;height:24px;background:#d0d0d0"></div>
<svg class="a" style="left:343px;top:306px" width="16" height="15" viewBox="0 0 16 15"><rect x="5.5" y="0.5" width="9" height="9" fill="#f0f0f0" stroke="#888"/><rect x="3.5" y="2.5" width="9" height="9" fill="#f4f4f4" stroke="#888"/><rect x="1.5" y="4.5" width="9" height="9" fill="#fff" stroke="#777"/><path d="M2.5 9l2.5 2.8 5-6" fill="none" stroke="#1aa04a" stroke-width="2"/></svg>
<svg class="a" style="left:372px;top:306px" width="16" height="15" viewBox="0 0 16 15"><rect x="5.5" y="0.5" width="9" height="9" fill="#f0f0f0" stroke="#888"/><rect x="3.5" y="2.5" width="9" height="9" fill="#f4f4f4" stroke="#888"/><rect x="1.5" y="4.5" width="9" height="9" fill="#fff" stroke="#777"/></svg>
<div class="a" style="left:416px;top:301px;width:95px;height:26px;border:1px solid #b9b9b9;border-radius:3px;background:linear-gradient(#ffffff 0%,#fbfbfb 50%,#ececec 100%);border-bottom-color:#9c9c9c;box-shadow:0 1px 0 #d0d0d0;"></div>
<div class="t" style="left:430.2px;top:307px;font-size:13.78px;line-height:13.78px;color:#404040;font-weight:normal;transform:scaleX(0.9434);transform-origin:0 0;letter-spacing:-0.1px">Заполнить</div>
<svg class="a" style="left:498.5px;top:313.0px" width="6" height="4" viewBox="0 0 6 4"><path d="M0 0h6l-3 3.2z" fill="#404040"/></svg>
<div class="a" style="left:1823px;top:301px;width:61px;height:26px;border:1px solid #b9b9b9;border-radius:3px;background:linear-gradient(#ffffff 0%,#fbfbfb 50%,#ececec 100%);border-bottom-color:#9c9c9c;box-shadow:0 1px 0 #d0d0d0;"></div>
<div class="t" style="left:1837px;top:307px;font-size:13.78px;line-height:13.78px;color:#404040;font-weight:normal;transform:scaleX(0.9434);transform-origin:0 0;">Еще</div>
<svg class="a" style="left:1871px;top:313.0px" width="6" height="4" viewBox="0 0 6 4"><path d="M0 0h6l-3 3.2z" fill="#404040"/></svg>
<div class="a" style="left:152px;top:331px;width:1732px;height:648px;border:1px solid #a9a9a9;background:#fff"></div>
<div class="a" style="left:153px;top:332px;width:1730px;height:92px;background:#f2f2f2"></div>
<div class="a" style="left:153px;top:424px;width:1730px;height:1px;background:#d6d6d6"></div>
<div class="a" style="left:153px;top:425px;width:1730px;height:85px;background:#fbec9f"></div>
<div class="a" style="left:153px;top:425px;width:49px;height:85px;background:#f9d81e"></div>
<div class="a" style="left:153px;top:510px;width:1730px;height:1px;background:#e6e6e6"></div>
<div class="a" style="left:202px;top:332px;width:1px;height:92px;background:#d9d9d9"></div>
<div class="a" style="left:202px;top:425px;width:1px;height:85px;background:#fff9dc"></div>
<div class="a" style="left:265px;top:332px;width:1px;height:92px;background:#d9d9d9"></div>
<div class="a" style="left:265px;top:425px;width:1px;height:85px;background:#fff9dc"></div>
<div class="a" style="left:458px;top:332px;width:1px;height:92px;background:#d9d9d9"></div>
<div class="a" style="left:458px;top:425px;width:1px;height:85px;background:#fff9dc"></div>
<div class="a" style="left:651px;top:332px;width:1px;height:92px;background:#d9d9d9"></div>
<div class="a" style="left:651px;top:425px;width:1px;height:85px;background:#fff9dc"></div>
<div class="a" style="left:952px;top:332px;width:1px;height:92px;background:#d9d9d9"></div>
<div class="a" style="left:952px;top:425px;width:1px;height:85px;background:#fff9dc"></div>
<div class="a" style="left:1127px;top:332px;width:1px;height:92px;background:#d9d9d9"></div>
<div class="a" style="left:1127px;top:425px;width:1px;height:85px;background:#fff9dc"></div>
<div class="a" style="left:1234px;top:332px;width:1px;height:92px;background:#d9d9d9"></div>
<div class="a" style="left:1234px;top:425px;width:1px;height:85px;background:#fff9dc"></div>
<div class="a" style="left:1339px;top:332px;width:1px;height:92px;background:#d9d9d9"></div>
<div class="a" style="left:1339px;top:425px;width:1px;height:85px;background:#fff9dc"></div>
<div class="a" style="left:1496px;top:332px;width:1px;height:92px;background:#d9d9d9"></div>
<div class="a" style="left:1496px;top:425px;width:1px;height:85px;background:#fff9dc"></div>
<div class="a" style="left:1689px;top:332px;width:1px;height:92px;background:#d9d9d9"></div>
<div class="a" style="left:1689px;top:425px;width:1px;height:85px;background:#fff9dc"></div>
<div class="a" style="left:266px;top:362px;width:686px;height:1px;background:#d9d9d9"></div>
<div class="a" style="left:266px;top:393px;width:686px;height:1px;background:#d9d9d9"></div>
<div class="a" style="left:953px;top:362px;width:386px;height:1px;background:#d9d9d9"></div>
<div class="a" style="left:1128px;top:393px;width:106px;height:1px;background:#d9d9d9"></div>
<div class="a" style="left:953px;top:393px;width:174px;height:1px;background:#d9d9d9"></div>
<div class="a" style="left:1340px;top:362px;width:156px;height:1px;background:#d9d9d9"></div>
<div class="a" style="left:1340px;top:393px;width:156px;height:1px;background:#d9d9d9"></div>
<div class="a" style="left:1497px;top:362px;width:386px;height:1px;background:#d9d9d9"></div>
<div class="a" style="left:801px;top:363px;width:1px;height:61px;background:#d9d9d9"></div>
<div class="a" style="left:739px;top:394px;width:1px;height:30px;background:#d9d9d9"></div>
<div class="a" style="left:889px;top:394px;width:1px;height:30px;background:#d9d9d9"></div>
<div class="a" style="left:266px;top:453px;width:686px;height:1px;background:#fff9dc"></div>
<div class="a" style="left:266px;top:482px;width:686px;height:1px;background:#fff9dc"></div>
<div class="a" style="left:953px;top:453px;width:281px;height:1px;background:#fff9dc"></div>
<div class="a" style="left:953px;top:482px;width:281px;height:1px;background:#fff9dc"></div>
<div class="a" style="left:1235px;top:453px;width:104px;height:1px;background:#fff9dc"></div>
<div class="a" style="left:1340px;top:453px;width:156px;height:1px;background:#fff9dc"></div>
<div class="a" style="left:1340px;top:482px;width:156px;height:1px;background:#fff9dc"></div>
<div class="a" style="left:1497px;top:453px;width:386px;height:1px;background:#fff9dc"></div>
<div class="a" style="left:801px;top:454px;width:1px;height:56px;background:#fff9dc"></div>
<div class="a" style="left:739px;top:483px;width:1px;height:27px;background:#fff9dc"></div>
<div class="a" style="left:889px;top:483px;width:1px;height:27px;background:#fff9dc"></div>
<div class="t" style="left:219.7px;top:340px;font-size:13.78px;line-height:13.78px;color:#555555;font-weight:normal;transform:scaleX(0.9434);transform-origin:0 0;letter-spacing:-0.12px">№</div>
<div class="t" style="left:282px;top:340px;font-size:13.78px;line-height:13.78px;color:#555555;font-weight:normal;transform:scaleX(0.9434);transform-origin:0 0;letter-spacing:-0.12px">Подразделение</div>
<div class="t" style="left:282px;top:371px;font-size:13.78px;line-height:13.78px;color:#555555;font-weight:normal;transform:scaleX(0.9434);transform-origin:0 0;letter-spacing:-0.12px">Контрагент</div>
<div class="t" style="left:282px;top:402px;font-size:13.78px;line-height:13.78px;color:#555555;font-weight:normal;transform:scaleX(0.9434);transform-origin:0 0;letter-spacing:-0.12px">Условие работы</div>
<div class="t" style="left:475px;top:340px;font-size:13.78px;line-height:13.78px;color:#555555;font-weight:normal;transform:scaleX(0.9434);transform-origin:0 0;letter-spacing:-0.12px">Объект строительства</div>
<div class="t" style="left:475px;top:371px;font-size:13.78px;line-height:13.78px;color:#555555;font-weight:normal;transform:scaleX(0.9434);transform-origin:0 0;letter-spacing:-0.12px">Вид перевозки</div>
<div class="t" style="left:475px;top:402px;font-size:13.78px;line-height:13.78px;color:#555555;font-weight:normal;transform:scaleX(0.9434);transform-origin:0 0;letter-spacing:-0.12px">Направление</div>
<div class="t" style="left:668.3px;top:340px;font-size:13.78px;line-height:13.78px;color:#555555;font-weight:normal;transform:scaleX(0.9434);transform-origin:0 0;letter-spacing:-0.12px">Маршрут</div>
<div class="t" style="left:668.3px;top:371px;font-size:13.78px;line-height:13.78px;color:#555555;font-weight:normal;transform:scaleX(0.9434);transform-origin:0 0;letter-spacing:-0.12px">Адрес прибытия</div>
<div class="t" style="left:818.3px;top:371px;font-size:13.78px;line-height:13.78px;color:#555555;font-weight:normal;transform:scaleX(0.9434);transform-origin:0 0;letter-spacing:-0.12px">Адрес убытия</div>
<div class="t" style="left:668.3px;top:402px;font-size:13.78px;line-height:13.78px;color:#555555;font-weight:normal;transform:scaleX(0.9434);transform-origin:0 0;letter-spacing:-0.12px">дата</div>
<div class="t" style="left:756.3px;top:402px;font-size:13.78px;line-height:13.78px;color:#555555;font-weight:normal;transform:scaleX(0.9434);transform-origin:0 0;letter-spacing:-0.12px">вр...</div>
<div class="t" style="left:818.3px;top:402px;font-size:13.78px;line-height:13.78px;color:#555555;font-weight:normal;transform:scaleX(0.9434);transform-origin:0 0;letter-spacing:-0.12px">дата</div>
<div class="t" style="left:906.1px;top:402px;font-size:13.78px;line-height:13.78px;color:#555555;font-weight:normal;transform:scaleX(0.9434);transform-origin:0 0;letter-spacing:-0.12px">вр...</div>
<div class="t" style="left:969.2px;top:340px;font-size:13.78px;line-height:13.78px;color:#555555;font-weight:normal;transform:scaleX(0.9434);transform-origin:0 0;letter-spacing:-0.12px">Номенклатура</div>
<div class="t" style="left:969.2px;top:371px;font-size:13.78px;line-height:13.78px;color:#555555;font-weight:normal;transform:scaleX(0.9434);transform-origin:0 0;letter-spacing:-0.12px">Время работы</div>
<div class="t" style="left:969.2px;top:402px;font-size:13.78px;line-height:13.78px;color:#555555;font-weight:normal;transform:scaleX(0.9434);transform-origin:0 0;letter-spacing:-0.12px">Подача</div>
<div class="t" style="left:1144.3px;top:340px;font-size:13.78px;line-height:13.78px;color:#555555;font-weight:normal;transform:scaleX(0.9434);transform-origin:0 0;letter-spacing:-0.12px">Ездок</div>
<div class="t" style="left:1144.3px;top:371px;font-size:13.78px;line-height:13.78px;color:#555555;font-weight:normal;transform:scaleX(0.9434);transform-origin:0 0;letter-spacing:-0.12px">Операций</div>
<div class="t" style="left:1144.3px;top:402px;font-size:13.78px;line-height:13.78px;color:#555555;font-weight:normal;transform:scaleX(0.9434);transform-origin:0 0;letter-spacing:-0.12px">Пассажиров</div>
<div class="t" style="left:1251.1px;top:340px;font-size:13.78px;line-height:13.78px;color:#555555;font-weight:normal;transform:scaleX(0.9434);transform-origin:0 0;letter-spacing:-0.12px">Вес груза, т</div>
<div class="t" style="left:1251.1px;top:371px;font-size:13.78px;line-height:13.78px;color:#555555;font-weight:normal;transform:scaleX(0.9434);transform-origin:0 0;letter-spacing:-0.12px">Объем, м3</div>
<div class="t" style="left:1356.1px;top:340px;font-size:13.78px;line-height:13.78px;color:#555555;font-weight:normal;transform:scaleX(0.9434);transform-origin:0 0;letter-spacing:-0.12px">Пробег с грузом</div>
<div class="t" style="left:1356.1px;top:371px;font-size:13.78px;line-height:13.78px;color:#555555;font-weight:normal;transform:scaleX(0.9434);transform-origin:0 0;letter-spacing:-0.12px">Пробег порожний</div>
<div class="t" style="left:1356.1px;top:402px;font-size:13.78px;line-height:13.78px;color:#555555;font-weight:normal;transform:scaleX(0.9434);transform-origin:0 0;letter-spacing:-0.12px">Спец. работы</div>
<div class="t" style="left:1513px;top:340px;font-size:13.78px;line-height:13.78px;color:#555555;font-weight:normal;transform:scaleX(0.9434);transform-origin:0 0;letter-spacing:-0.12px">Прицеп/оборуд. 1</div>
<div class="t" style="left:1513px;top:371px;font-size:13.78px;line-height:13.78px;color:#555555;font-weight:normal;transform:scaleX(0.9434);transform-origin:0 0;letter-spacing:-0.12px">Время работы 1</div>
<div class="t" style="left:1706px;top:340px;font-size:13.78px;line-height:13.78px;color:#555555;font-weight:normal;transform:scaleX(0.9434);transform-origin:0 0;letter-spacing:-0.12px">Прицеп/оборуд 2</div>
<div class="t" style="left:1706px;top:371px;font-size:13.78px;line-height:13.78px;color:#555555;font-weight:normal;transform:scaleX(0.9434);transform-origin:0 0;letter-spacing:-0.12px">Время работы 2</div>
<div class="t" style="left:475px;top:433px;font-size:13.78px;line-height:13.78px;color:#333;font-weight:normal;transform:scaleX(0.9434);transform-origin:0 0;letter-spacing:-0.12px;">п.Птичное</div>
<div class="t" style="right:701.0px;top:433.36px;font-size:13px;line-height:13px;color:#333">1</div>
<div class="t" style="right:439.0px;top:433.36px;font-size:13px;line-height:13px;color:#333;letter-spacing:-0.2px">250,000</div>
<div class="t" style="left:282.5px;top:462px;font-size:13.78px;line-height:13.78px;color:#333;font-weight:normal;transform:scaleX(0.9434);transform-origin:0 0;letter-spacing:-0.12px;">ВЕКТОР-Ф ООО</div>
<div class="t" style="left:475px;top:462px;font-size:13.78px;line-height:13.78px;color:#333;font-weight:normal;transform:scaleX(0.9434);transform-origin:0 0;letter-spacing:-0.12px;">Автомобильная грузовая</div>
<div class="t" style="left:668.5px;top:491px;font-size:13.78px;line-height:13.78px;color:#333;font-weight:normal;transform:scaleX(0.9434);transform-origin:0 0;letter-spacing:-0.12px;">01.06.2...</div>
<div class="t" style="left:756.3px;top:491px;font-size:13.78px;line-height:13.78px;color:#333;font-weight:normal;transform:scaleX(0.9434);transform-origin:0 0;letter-spacing:-0.12px;">08...</div>
<div class="t" style="left:818.3px;top:491px;font-size:13.78px;line-height:13.78px;color:#333;font-weight:normal;transform:scaleX(0.9434);transform-origin:0 0;letter-spacing:-0.12px;">01.06.2...</div>
<div class="t" style="left:906px;top:491px;font-size:13.78px;line-height:13.78px;color:#333;font-weight:normal;transform:scaleX(0.9434);transform-origin:0 0;letter-spacing:-0.12px;">17:...</div>
<div class="t" style="left:1356px;top:490px;font-size:11.66px;line-height:11.66px;color:#333;font-weight:normal;transform:scaleX(0.9434);transform-origin:0 0;text-decoration:underline;letter-spacing:-0.2px">Редактировать</div>
<svg class="a" style="left:170px;top:430px" width="16" height="17" viewBox="0 0 16 17"><rect x="0.5" y="2.5" width="14" height="14" fill="#fff" stroke="#a9a9a9"/><path d="M3 8.6l3.3 3.8 6.8-10.2" fill="none" stroke="#16925a" stroke-width="2.6"/></svg>
<div class="a" style="left:194px;top:448px;width:59px;height:23px;background:#fffbe6;border:1px solid #c9c19c"></div>
<div class="t" style="left:198px;top:453px;font-size:13.78px;line-height:13.78px;color:#222;font-weight:normal;transform:scaleX(0.9434);transform-origin:0 0;letter-spacing:-0.2px">Задание</div>
<div class="a" style="left:259px;top:444px;width:175px;height:51px;border:3px solid #e00a0a;border-radius:2px"></div>
<div class="t" style="left:141px;top:1004px;font-size:13.78px;line-height:13.78px;color:#555;font-weight:normal;transform:scaleX(0.9434);transform-origin:0 0;letter-spacing:-0.1px">Комментарий:</div>
<div class="a" style="left:230px;top:998px;width:1146px;height:25px;border:1px solid #a6a6a6;border-radius:3px;background:#fff"></div>
<div class="a" style="left:1354px;top:999px;width:1px;height:23px;background:#bdbdbd"></div>
<div class="t" style="left:1359px;top:1005px;font-size:11.66px;line-height:11.66px;color:#555;font-weight:normal;transform:scaleX(0.9434);transform-origin:0 0;">...</div>
<div class="t" style="left:1386px;top:1004px;font-size:13.78px;line-height:13.78px;color:#555;font-weight:normal;transform:scaleX(0.9434);transform-origin:0 0;letter-spacing:-0.1px">Ответственный:</div>
<div class="a" style="left:1485px;top:998px;width:410px;height:25px;border:1px solid #a6a6a6;border-radius:3px;background:#fff"></div>
<div class="a" style="left:1852px;top:999px;width:1px;height:23px;background:#bdbdbd"></div>
<div class="a" style="left:1874px;top:999px;width:1px;height:23px;background:#bdbdbd"></div>
<svg class="a" style="left:1859.5px;top:1008.5px" width="6" height="4" viewBox="0 0 6 4"><path d="M0 0h6l-3 3.2z" fill="#404040"/></svg>
<svg class="a" style="left:1881px;top:1005px" width="10" height="10" viewBox="0 0 10 10"><rect x="3.85" y="0.75" width="5" height="5" fill="none" stroke="#333" stroke-width="1.4"/><path d="M2.2 3.6H0.7V8.9H6V7.4" fill="none" stroke="#333" stroke-width="1.4"/></svg>
</body></html>
